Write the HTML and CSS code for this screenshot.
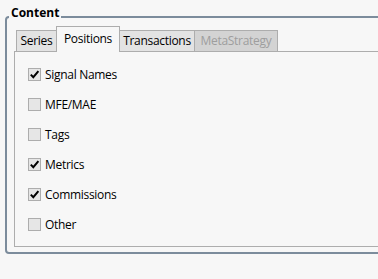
FILE: index.html
```html
<!DOCTYPE html>
<html>
<head>
<meta charset="utf-8">
<link rel="stylesheet" href="styles.css">
</head>
<body>
<div class="group">
  <span class="group-title">Content</span>
  <div class="tabs">
    <div class="tab tab-series">Series</div>
    <div class="tab tab-positions selected">Positions</div>
    <div class="tab tab-transactions">Transactions</div>
    <div class="tab tab-meta disabled">MetaStrategy</div>
  </div>
  <div class="panel">
    <div class="row"><span class="box checked"><svg viewBox="0 0 11 11" width="11" height="11"><path d="M1.8 5.6 L4.3 8.2 L9.4 2.2" fill="none" stroke="#000" stroke-width="2"/></svg></span><span class="label">Signal Names</span></div>
    <div class="row"><span class="box"></span><span class="label">MFE/MAE</span></div>
    <div class="row"><span class="box"></span><span class="label">Tags</span></div>
    <div class="row"><span class="box checked"><svg viewBox="0 0 11 11" width="11" height="11"><path d="M1.8 5.6 L4.3 8.2 L9.4 2.2" fill="none" stroke="#000" stroke-width="2"/></svg></span><span class="label">Metrics</span></div>
    <div class="row"><span class="box checked"><svg viewBox="0 0 11 11" width="11" height="11"><path d="M1.8 5.6 L4.3 8.2 L9.4 2.2" fill="none" stroke="#000" stroke-width="2"/></svg></span><span class="label">Commissions</span></div>
    <div class="row"><span class="box"></span><span class="label">Other</span></div>
  </div>
</div>
</body>
</html>
```
FILE: styles.css
```css
html, body {
  margin: 0;
  padding: 0;
  background: #f7f7f7;
  overflow: hidden;
  width: 378px;
  height: 279px;
}
body {
  font-family: "Open Sans", "Noto Sans", sans-serif;
  font-size: 12px;
  letter-spacing: -0.3px;
  color: #000;
}
.group {
  position: relative;
  margin: 16px 0 0 5px;
  width: 420px;
  border: 2px solid #7c8c9c;
  border-radius: 4px;
  padding: 8px 0 5px 7px;
}
.group-title {
  position: absolute;
  top: -13px;
  left: 2px;
  padding: 0 2px;
  background: #f7f7f7;
  font-weight: bold;
  letter-spacing: 0;
  line-height: 15px;
}
.tabs {
  display: flex;
  align-items: flex-end;
  height: 25px;
  padding-left: 2px;
}
.tab {
  box-sizing: border-box;
  height: 21px;
  border: 1px solid #adadad;
  border-bottom: none;
  background: #e3e3e3;
  text-align: center;
  line-height: 19px;
  white-space: nowrap;
}
.tab + .tab { margin-left: -1px; }
.tab-series { width: 41px; }
.tab-positions { width: 64px; }
.tab-transactions { width: 76px; }
.tab-meta { width: 84px; }
.tab.selected {
  position: relative;
  z-index: 1;
  height: 26px;
  margin-bottom: -1px;
  background: #f7f7f7;
  line-height: 23px;
}
.tab.disabled {
  background: #d3d3d3;
  color: #9e9e9e;
}
.panel {
  box-sizing: border-box;
  height: 196px;
  border: 1px solid #adadad;
  padding: 16px 0 0 13px;
  display: flex;
  flex-direction: column;
  gap: 17px;
}
.row {
  display: flex;
  align-items: center;
  height: 13px;
}
.box {
  box-sizing: border-box;
  width: 13px;
  height: 13px;
  border: 1px solid #adadad;
  background: #e6e6e6;
  display: flex;
  align-items: center;
  justify-content: center;
}
.box svg { display: block; }
.label {
  margin-left: 4px;
  line-height: 13px;
}
```
